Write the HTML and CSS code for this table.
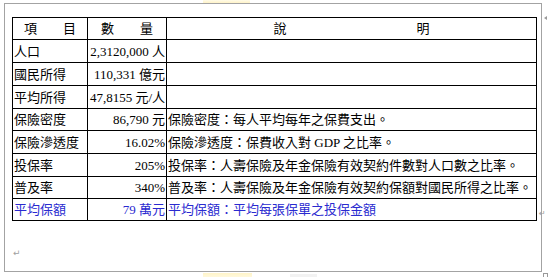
FILE: index.html
```html
<!DOCTYPE html>
<html lang="zh-Hant">
<head>
<meta charset="utf-8">
<title>保險指標</title>
<link rel="stylesheet" href="styles.css">
</head>
<body>
<div class="strip strip-top"><span class="glow"></span></div>
<div class="main">
  <div class="frame">
    <div class="table-row">
      <table class="data">
        <colgroup><col class="c1"><col class="c2"><col class="c3"></colgroup>
        <tr class="short head">
          <td class="center">項　　目</td>
          <td class="center">數　　量</td>
          <td class="center">說　　　　　　　　　　明</td>
        </tr>
        <tr><td>人口</td><td class="num">2,3120,000 人</td><td></td></tr>
        <tr><td>國民所得</td><td class="num">110,331 億元</td><td></td></tr>
        <tr><td>平均所得</td><td class="num">47,8155 元/人</td><td></td></tr>
        <tr class="short"><td>保險密度</td><td class="num">86,790 元</td><td>保險密度：每人平均每年之保費支出。</td></tr>
        <tr><td>保險滲透度</td><td class="num">16.02%</td><td>保險滲透度：保費收入對 GDP 之比率。</td></tr>
        <tr><td>投保率</td><td class="num">205%</td><td>投保率：人壽保險及年金保險有效契約件數對人口數之比率。</td></tr>
        <tr class="short"><td>普及率</td><td class="num">340%</td><td>普及率：人壽保險及年金保險有效契約保額對國民所得之比率。</td></tr>
        <tr class="short blue"><td>平均保額</td><td class="num">79 萬元</td><td>平均保額：平均每張保單之投保金額</td></tr>
      </table>
      <span class="cell-mark">↵</span>
    </div>
    <div class="para-mark">↵</div>
  </div>
  <div class="gutter"><span class="row-mark"></span></div>
</div>
<div class="strip strip-bottom">
  <span class="glow glow-b"></span>
  <span class="shade"></span>
  <span class="corner"></span>
</div>
</body>
</html>
```

FILE: styles.css
```css
html, body {
  margin: 0;
  padding: 0;
  background: #ffffff;
}
body {
  width: 550px;
  height: 277px;
  overflow: hidden;
  font-family: "Liberation Serif", "Noto Sans CJK TC", serif;
  font-size: 13px;
  color: #000;
}
.strip {
  display: flex;
  height: 3px;
}
.strip-top .glow {
  margin-left: 203px;
  width: 47px;
  height: 3px;
  background: linear-gradient(to bottom, #fffbe8, #fff3c8);
}
.main {
  display: flex;
  margin-left: 4px;
}
.frame {
  box-sizing: border-box;
  width: 538px;
  height: 269px;
  border: 1px solid #a3a3a3;
  padding: 13px 0 0 7px;
}
.gutter {
  width: 8px;
  padding-top: 13px;
  padding-left: 2px;
}
.row-mark {
  display: block;
  width: 0;
  height: 0;
  border-top: 2px solid transparent;
  border-bottom: 2px solid transparent;
  border-right: 3px solid #9a9a9a;
}
.table-row {
  display: flex;
  align-items: flex-end;
}
.data {
  table-layout: fixed;
  width: 525px;
  border-collapse: separate;
  border-spacing: 1px;
  background: #000;
}
.c1 { width: 74px; }
.c2 { width: 78px; }
.c3 { width: 369px; }
.data td {
  background: #fff;
  padding: 0 0 0 1px;
  height: 22px;
  line-height: 13px;
  white-space: pre;
  vertical-align: middle;
  overflow: hidden;
}
.data tr.short td {
  height: 21px;
}
.data td.num {
  text-align: right;
  padding: 0 1px 0 0;
}
.data td.center {
  text-align: center;
  padding: 0;
}
.data tr.blue td {
  color: #2a2ad0;
}
.cell-mark {
  font-family: "DejaVu Sans", sans-serif;
  font-size: 8px;
  line-height: 8px;
  color: #9a9a9a;
  margin: 0 0 3px 2px;
}
.para-mark {
  margin: 28px 0 0 1px;
  font-family: "DejaVu Sans", sans-serif;
  font-size: 9px;
  line-height: 9px;
  color: #a0a0a0;
}
.strip-bottom {
  height: 6px;
  align-items: flex-end;
}
.glow-b {
  margin-left: 203px;
  width: 49px;
  height: 5px;
  background: linear-gradient(to bottom, #fff4c8, #fff9e0);
}
.shade {
  margin-left: 38px;
  width: 27px;
  height: 4px;
  background: #f2f2f2;
}
.corner {
  margin-left: 226px;
  width: 3px;
  height: 4px;
  border: 1px solid #9a9a9a;
  border-bottom: none;
}
```
